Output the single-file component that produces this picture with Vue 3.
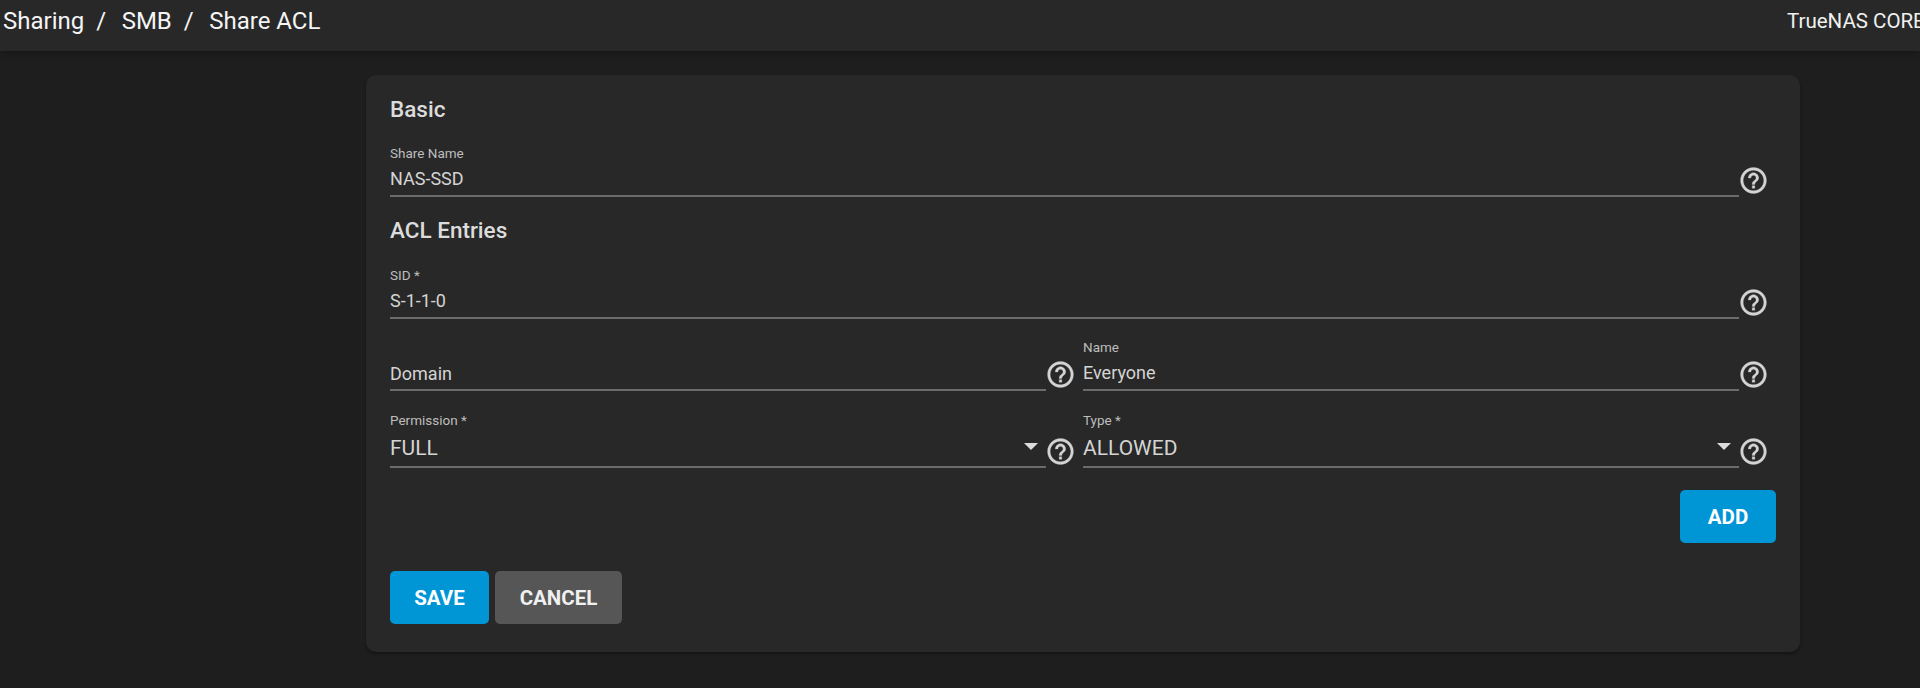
<script setup>
const help = 'M11 18h2v-2h-2v2zm1-16C6.48 2 2 6.48 2 12s4.48 10 10 10 10-4.48 10-10S17.52 2 12 2zm0 18c-4.41 0-8-3.59-8-8s3.59-8 8-8 8 3.59 8 8-3.59 8-8 8zm0-14c-2.21 0-4 1.79-4 4h2c0-1.1.9-2 2-2s2 .9 2 2c0 2-3 1.75-3 5h2c0-2.25 3-2.5 3-5 0-2.21-1.79-4-4-4z'
const crumbs = ['Sharing', 'SMB', 'Share ACL']
const nameRow = [{ label: 'Domain', value: '' , placeholder: true }, { label: 'Name', value: 'Everyone' }]
const selectRow = [{ label: 'Permission *', value: 'FULL' }, { label: 'Type *', value: 'ALLOWED' }]
</script>

<template>
  <div class="page">
    <header class="toolbar">
      <nav class="crumbs">
        <template v-for="(c, i) in crumbs" :key="c">
          <span class="crumb">{{ c }}</span>
          <span v-if="i < crumbs.length - 1" class="sep">/</span>
        </template>
      </nav>
      <div class="brand">TrueNAS CORE</div>
    </header>
    <main class="content">
      <section class="card">
        <h3 class="heading first">Basic</h3>
        <div class="field-row">
          <div class="field">
            <label class="label">Share Name</label>
            <div class="value">NAS-SSD</div>
          </div>
          <svg class="help" viewBox="0 0 24 24"><path :d="help" /></svg>
        </div>
        <h3 class="heading second">ACL Entries</h3>
        <div class="field-row">
          <div class="field">
            <label class="label">SID *</label>
            <div class="value">S-1-1-0</div>
          </div>
          <svg class="help" viewBox="0 0 24 24"><path :d="help" /></svg>
        </div>
        <div class="columns row-names">
          <div v-for="f in nameRow" :key="f.label" class="field-row">
            <div class="field">
              <label v-if="!f.placeholder" class="label">{{ f.label }}</label>
              <div class="value" :class="{ alone: f.placeholder }">{{ f.value || f.label }}</div>
            </div>
            <svg class="help" viewBox="0 0 24 24"><path :d="help" /></svg>
          </div>
        </div>
        <div class="columns row-selects">
          <div v-for="f in selectRow" :key="f.label" class="field-row">
            <div class="field select">
              <label class="label">{{ f.label }}</label>
              <div class="value big">{{ f.value }}</div>
              <span class="arrow"></span>
            </div>
            <svg class="help" viewBox="0 0 24 24"><path :d="help" /></svg>
          </div>
        </div>
        <div class="add-row">
          <button class="btn primary add">ADD</button>
        </div>
        <div class="actions">
          <button class="btn primary save">SAVE</button>
          <button class="btn neutral cancel">CANCEL</button>
        </div>
      </section>
    </main>
  </div>
</template>

<style>
html, body { margin: 0; background: #1e1e1e; overflow: hidden; }
</style>

<style scoped>
.page {
  width: 1920px;
  height: 688px;
  overflow: hidden;
  background: #1e1e1e;
  font-family: Roboto, "Liberation Sans", sans-serif;
  color: #e0e0e0;
}
.toolbar {
  height: 51px;
  box-sizing: border-box;
  background: #282828;
  display: flex;
  align-items: flex-start;
  justify-content: space-between;
  padding-left: 3px;
  box-shadow: 0 2px 6px rgba(0, 0, 0, 0.25);
  white-space: nowrap;
}
.crumbs {
  display: flex;
  align-items: center;
  height: 42px;
  font-size: 24px;
  color: #f5f5f5;
}
.sep { margin: 0 15.5px 0 12px; }
.brand {
  width: 133px;
  margin-top: 8px;
  font-size: 20.5px;
  line-height: 26px;
  color: #f0f0f0;
  overflow: hidden;
}
.content { padding: 24px 120px 0 366px; }
.card {
  width: 1434px;
  height: 577px;
  box-sizing: border-box;
  padding: 0 24px;
  background: #282828;
  border-radius: 10px;
  box-shadow: 0 2px 3px rgba(0, 0, 0, 0.35);
}
.heading {
  margin: 0;
  font-size: 22.5px;
  font-weight: 500;
  line-height: 24px;
  color: #dcdcdc;
}
.heading.first { padding-top: 22px; margin-bottom: 21px; }
.heading.second { margin: 21px 0 22px; }
.columns { display: grid; grid-template-columns: 693px 693px; }
.row-names { margin-top: 17px; }
.row-selects { margin-top: 22px; }
.field-row { display: flex; align-items: flex-end; }
.field {
  position: relative;
  flex: 1;
  height: 55px;
  box-sizing: border-box;
  border-bottom: 2px solid #6b6b6b;
}
.label {
  display: block;
  height: 20px;
  margin-top: 1px;
  font-size: 13.5px;
  line-height: 20px;
  color: #bdbdbd;
}
.select .label { margin-top: -3px; }
.value {
  margin-top: 4px;
  font-size: 18px;
  line-height: 24px;
  color: #d4d4d4;
}
.value.alone { margin-top: 0; padding-top: 26px; }
.value.big { margin-top: 6px; font-size: 21px; }
.arrow {
  position: absolute;
  right: 8px;
  top: 30px;
  width: 0;
  height: 0;
  border-left: 7px solid transparent;
  border-right: 7px solid transparent;
  border-top: 7px solid #dcdcdc;
}
.help {
  flex: none;
  width: 31px;
  height: 31px;
  margin: 0 7px 0 -1px;
  fill: #d4d4d4;
  stroke: #d4d4d4;
  stroke-width: 0.25;
  position: relative;
  top: -1px;
}
.add-row { display: flex; justify-content: flex-end; margin-top: 22px; }
.btn {
  height: 53px;
  border: none;
  border-radius: 5px;
  font-family: inherit;
  font-size: 20.5px;
  font-weight: 700;
  padding: 0;
  color: #fff;
}
.primary { background: #0095d5; }
.neutral { background: #565656; color: #f0f0f0; }
.add { width: 96px; }
.actions { display: flex; gap: 6px; margin-top: 28px; }
.save { width: 99px; }
.cancel { width: 127px; }
</style>
